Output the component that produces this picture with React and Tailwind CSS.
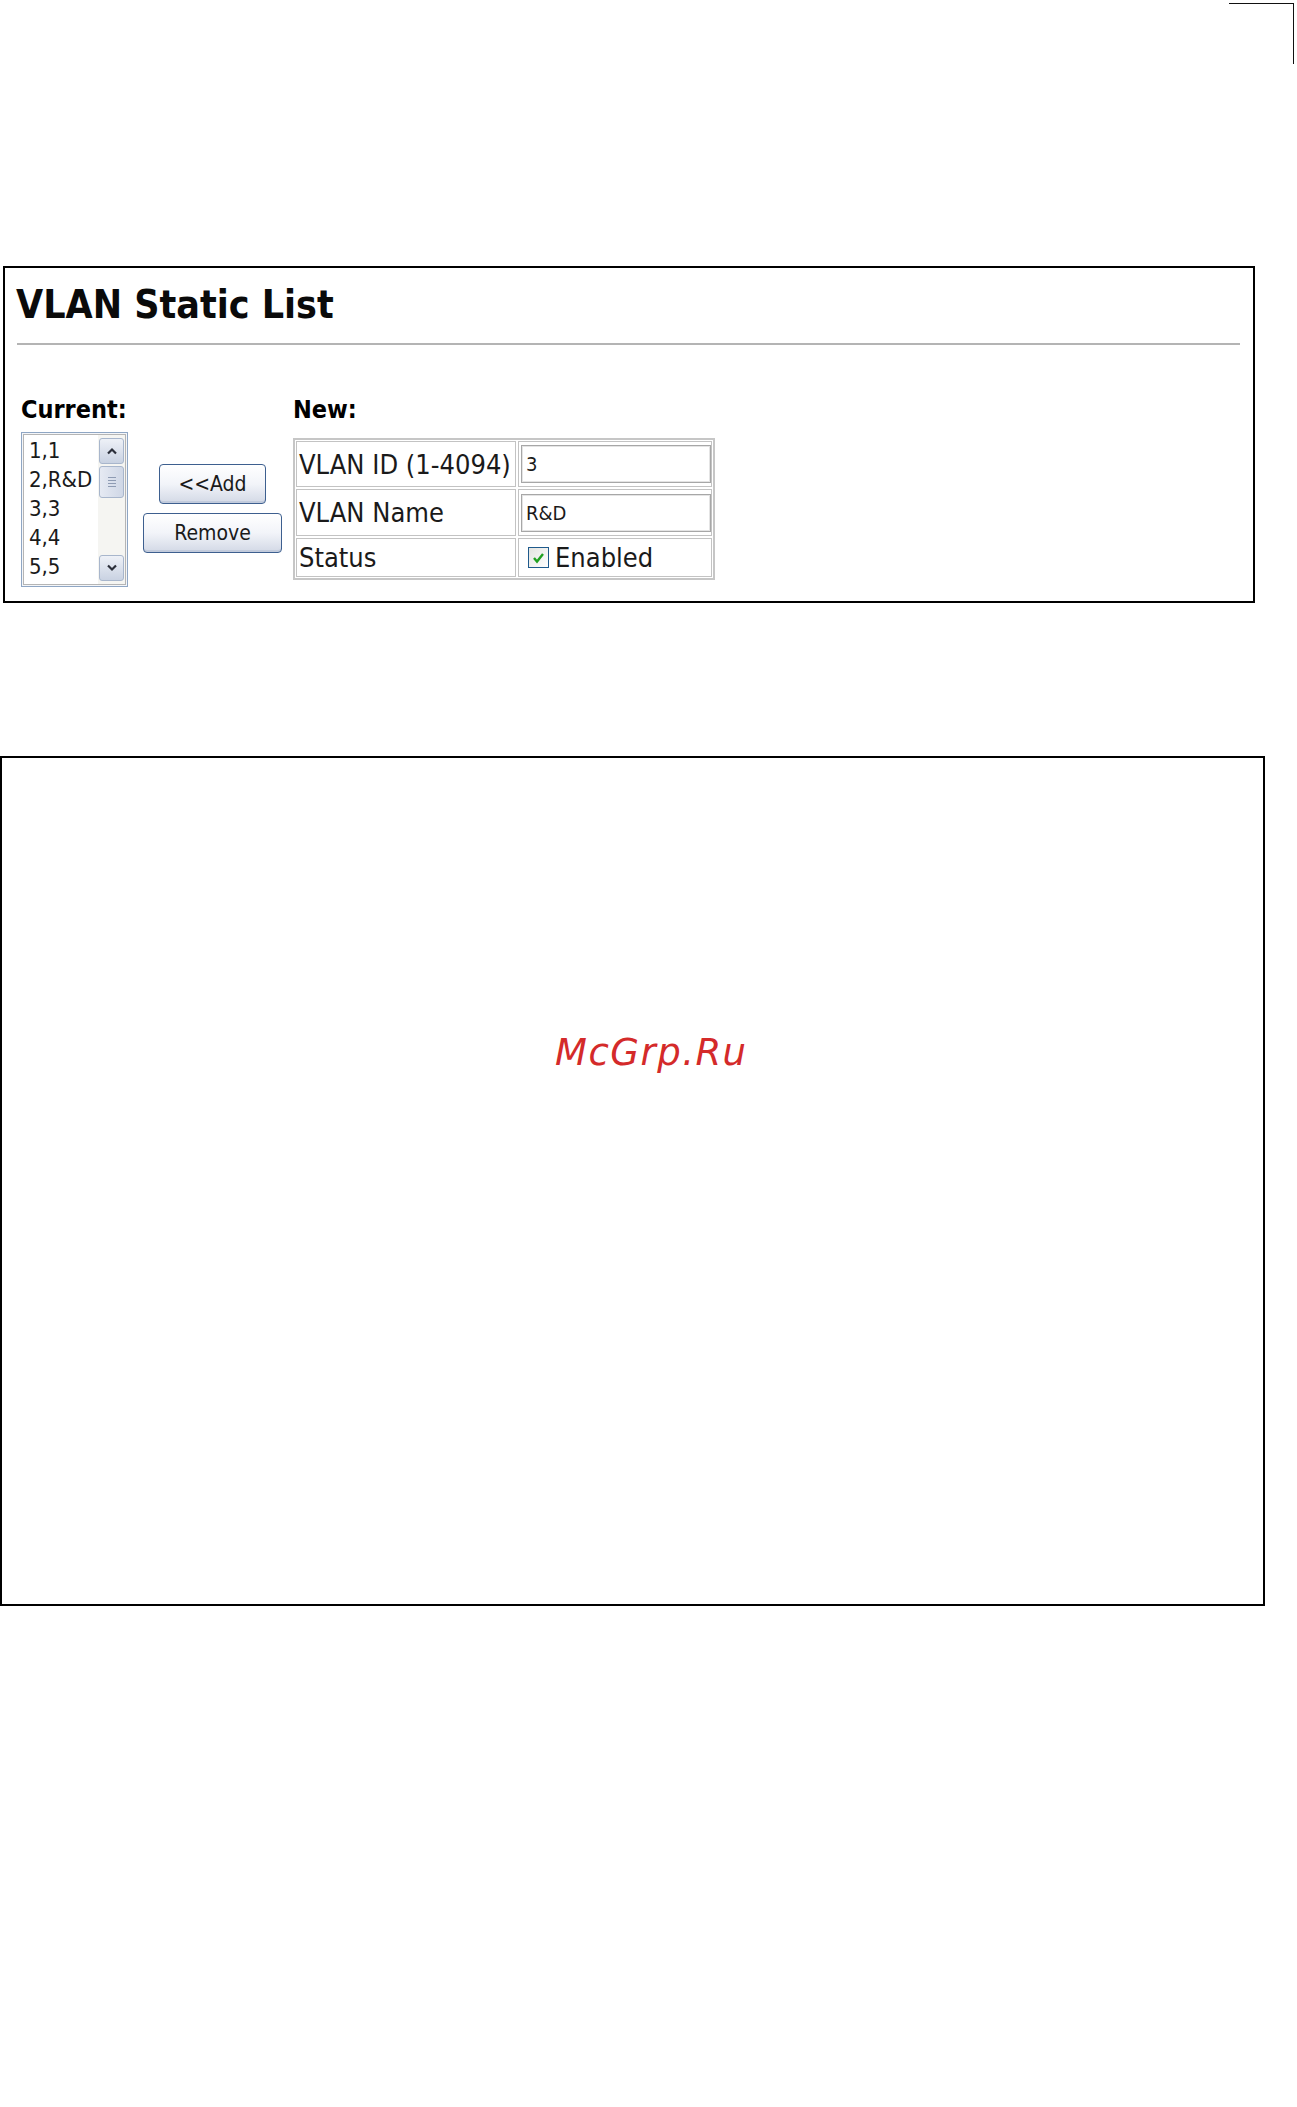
const FONT = "font-['DejaVu_Sans_Condensed','DejaVu_Sans',sans-serif]";

const items = ["1,1", "2,R&D", "3,3", "4,4", "5,5"];

function XpButton({ children, className }) {
  return (
    <button
      className={`rounded-[4px] border border-[#3d5f8f] bg-gradient-to-b from-white via-[#f2f4f9] to-[#d3d9e6] text-[21px] leading-none text-[#1a1a1a] shadow-[inset_0_-2px_0_#c2cbdc] ${className}`}
    >
      {children}
    </button>
  );
}

function ScrollArrow({ up }) {
  return (
    <div className="h-[26px] w-[25px] rounded-[3px] border border-[#a8b6cc] bg-gradient-to-b from-[#eef1f7] to-[#c9d2e2] flex items-center justify-center">
      <svg width="12" height="8" viewBox="0 0 12 8">
        <path
          d={up ? "M2 6.5 L6 2.5 L10 6.5" : "M2 1.5 L6 5.5 L10 1.5"}
          fill="none"
          stroke="#2b2f3a"
          strokeWidth="2.2"
        />
      </svg>
    </div>
  );
}

function ListBox() {
  return (
    <div className="mt-[10px] h-[155px] w-[107px] border border-[#8fa6c4] p-[1px] bg-[#f4f6f9]">
      <div className="flex h-full border border-[#b5b5b5] bg-white">
        <div className="flex-1 pl-[5px] pt-[1px] text-[22px] leading-[29px] text-[#1a1a1a]">
          {items.map((it) => (
            <div key={it}>{it}</div>
          ))}
        </div>
        <div className="w-[27px] flex flex-col items-center bg-[#f5f5f2] py-[3px]">
          <ScrollArrow up />
          <div className="mt-[2px] h-[32px] w-[25px] rounded-[3px] border border-[#a8b6cc] bg-gradient-to-r from-[#e6eaf3] to-[#cfd7e6] flex items-center justify-center">
            <div className="flex flex-col gap-[2px]">
              <div className="h-px w-[8px] bg-[#8e9bb3]" />
              <div className="h-px w-[8px] bg-[#8e9bb3]" />
              <div className="h-px w-[8px] bg-[#8e9bb3]" />
              <div className="h-px w-[8px] bg-[#8e9bb3]" />
            </div>
          </div>
          <div className="flex-1" />
          <ScrollArrow />
        </div>
      </div>
    </div>
  );
}

function TextInput({ value }) {
  return (
    <div className="h-[38px] w-[190px] border border-[#a7a7a7] shadow-[inset_0_0_0_1px_#e4e4e4] bg-white flex items-center pl-[4px] text-[20px] text-[#1a1a1a]">
      {value}
    </div>
  );
}

function NewTable() {
  const cell = "border border-[#c3c3c3] flex items-center";
  return (
    <div className="mt-[16px] w-[422px] border-2 border-[#c6c6c6] p-[1px]">
      <div className="grid grid-cols-[220px_1fr] grid-rows-[46px_47px_39px] gap-[2px] text-[27px] leading-none text-[#1a1a1a]">
        <div className={`${cell} pl-[2px]`}>VLAN ID (1-4094)</div>
        <div className={`${cell} pl-[2px]`}>
          <TextInput value="3" />
        </div>
        <div className={`${cell} pl-[2px]`}>VLAN Name</div>
        <div className={`${cell} pl-[2px]`}>
          <TextInput value="R&D" />
        </div>
        <div className={`${cell} pl-[2px]`}>Status</div>
        <div className={`${cell} pl-[9px] gap-[6px]`}>
          <div className="h-[21px] w-[21px] border border-[#1f5a8c] bg-gradient-to-br from-[#e4e4e0] to-white flex items-center justify-center">
            <svg width="13" height="12" viewBox="0 0 13 12">
              <path d="M2 6 L5 9.5 L11 2" fill="none" stroke="#21a121" strokeWidth="2.4" />
            </svg>
          </div>
          <span>Enabled</span>
        </div>
      </div>
    </div>
  );
}

export default function App() {
  return (
    <div className={`${FONT} bg-white w-[1297px] h-[2107px] text-black`}>
      {/* crop mark */}
      <div className="flex justify-end pt-[3px] pr-[3px]">
        <div className="h-[61px] w-[65px] border-t border-r border-[#111]" />
      </div>

      {/* VLAN Static List panel */}
      <div className="ml-[3px] mt-[202px] h-[337px] w-[1252px] border-2 border-black">
        <h1 className="pl-[11px] pt-[17px] text-[39px] font-bold leading-none text-[#0a0a0a]">VLAN Static List</h1>
        <div className="ml-[12px] mr-[13px] mt-[19px] h-[2px] bg-[#b4b4b4]" />

        <div className="mt-[52px] ml-[16px] flex items-start">
          <div className="w-[107px]">
            <div className="text-[25px] font-bold leading-none">Current:</div>
            <ListBox />
          </div>

          <div className="ml-[15px] mt-[67px] w-[139px] flex flex-col items-center gap-[9px]">
            <XpButton className="h-[40px] w-[107px]">&lt;&lt;Add</XpButton>
            <XpButton className="h-[40px] w-[139px]">Remove</XpButton>
          </div>

          <div className="ml-[11px]">
            <div className="text-[25px] font-bold leading-none">New:</div>
            <NewTable />
          </div>
        </div>
      </div>

      {/* empty panel with watermark */}
      <div className="mt-[153px] h-[850px] w-[1265px] border-2 border-black pt-[276px] pl-[553px]">
        <div className="font-['DejaVu_Sans',sans-serif] italic text-[37px] leading-none tracking-[1.5px] text-[#d42a2a]">
          McGrp.Ru
        </div>
      </div>
    </div>
  );
}
